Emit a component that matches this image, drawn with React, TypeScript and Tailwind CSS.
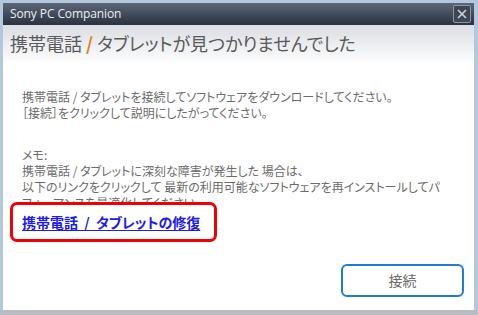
import { X } from "lucide-react";

const jp = "font-['Noto_Sans_CJK_JP','Noto_Sans',sans-serif] [font-feature-settings:'palt']";

export default function App() {
  return (
    <div className="flex h-[315px] w-[478px] flex-col bg-[#b3c7df] pl-[3px] pr-[4px] pt-[3px]">
      {/* title bar */}
      <div className="flex h-[22px] shrink-0 items-center justify-between bg-gradient-to-b from-[#5c6779] to-[#29323f] pl-[7px] pr-[3px]">
        <span className="font-['Open_Sans',sans-serif] text-[12px] leading-none tracking-[-0.1px] text-[#e9edf3]">
          Sony PC Companion
        </span>
        <button
          type="button"
          className="flex h-[18px] w-[18px] items-center justify-center rounded-[2px] border border-[#8d96a3] bg-[#3c4656]"
        >
          <X size={14} strokeWidth={3} className="text-[#c9ced6]" />
        </button>
      </div>

      {/* content */}
      <div className={`flex flex-1 flex-col bg-gradient-to-b from-[#dadde2] via-white via-[40px] to-white pl-[19px] ${jp}`}>
        <h1 className="-ml-[12px] mt-[8px] text-[18px] leading-[21px] text-[#5a5a5a]">
          携帯電話 <span className="font-bold text-[#d9822b]">/</span> タブレットが見つかりませんでした
        </h1>

        <div className="mt-[35px] text-[12px] leading-[16px] text-[#6b6b6b]">
          <p>携帯電話 / タブレットを接続してソフトウェアをダウンロードしてください。</p>
          <p>［接続］をクリックして説明にしたがってください。</p>
        </div>

        <div className="mt-[26px] overflow-hidden whitespace-nowrap text-[12px] leading-[16px] text-[#6b6b6b]">
          <p>メモ:</p>
          <p>携帯電話 / タブレットに深刻な障害が発生した 場合は、</p>
          <p>以下のリンクをクリックして 最新の利用可能なソフトウェアを再インストールしてパ</p>
          <p>フォーマンスを最適化してください。</p>
        </div>

        <div className="-ml-[12px] -mt-[9px] flex h-[40px] w-[207px] items-center rounded-[7px] border-[3px] border-[#f00000] bg-white pl-[9px]">
          <a href="#" className="text-[14px] font-bold leading-none text-[#1c1cf0] underline underline-offset-2">
            {"携帯電話\u00a0\u00a0/\u00a0\u00a0タブレットの修復"}
          </a>
        </div>

        <div className="mb-[13px] mr-[10px] mt-auto flex justify-end">
          <button
            type="button"
            className="flex h-[33px] w-[123px] items-center justify-center rounded-[6px] border-2 border-[#1d7ae0] bg-white text-[14px] text-[#6a6a6a]"
          >
            接続
          </button>
        </div>
      </div>

      {/* bottom edge */}
      <div className="-ml-[3px] -mr-[4px] h-[5px] shrink-0 bg-[#b9bcc2]" />
    </div>
  );
}
